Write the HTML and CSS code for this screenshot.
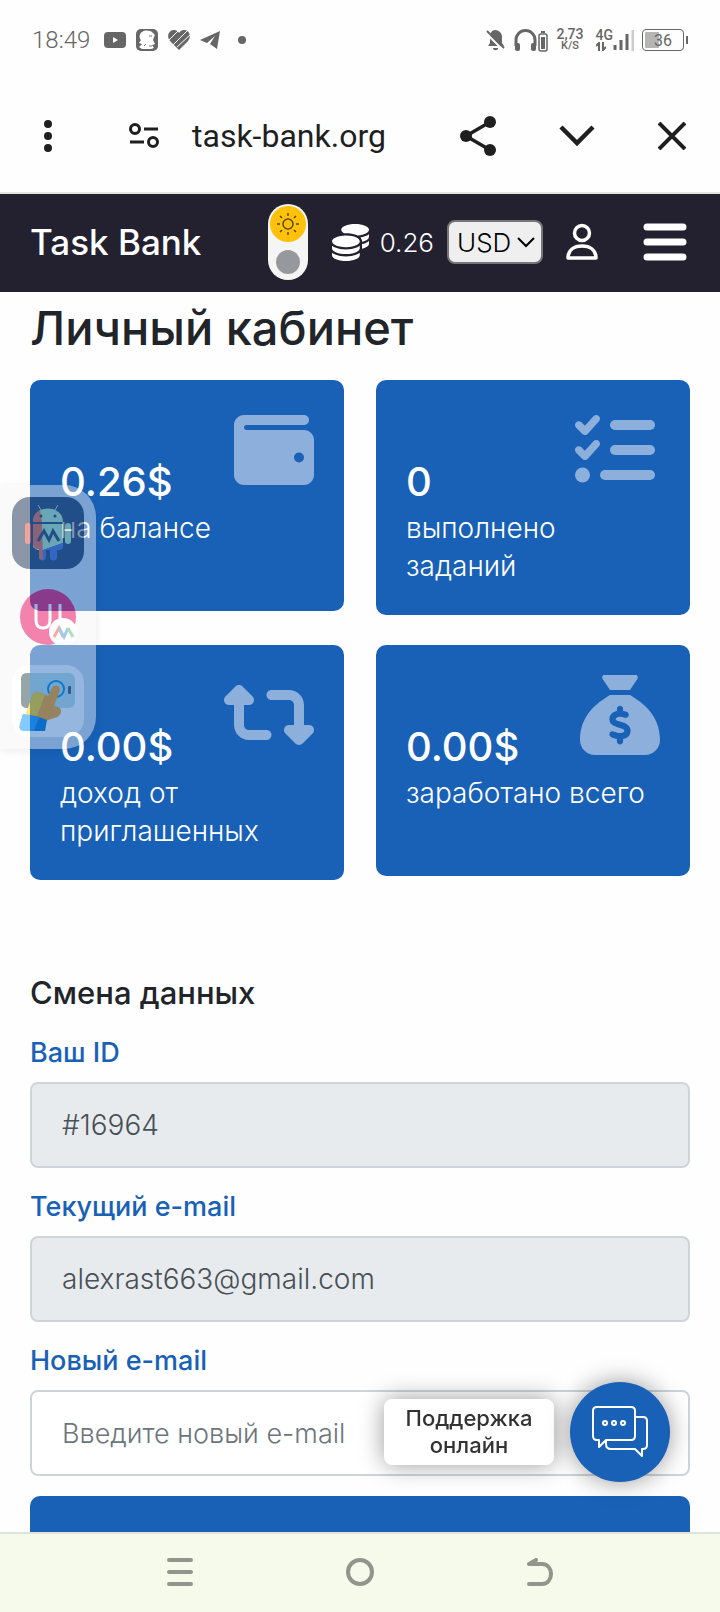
FILE: index.html
```html
<!DOCTYPE html>
<html lang="ru">
<head>
    <meta charset="UTF-8">
    <meta name="viewport" content="width=device-width, initial-scale=1.0">
    <title>Task Bank - Личный кабинет</title>
    <link rel="stylesheet" href="styles.css">
</head>
<body>

    <div class="status-bar">
        <div class="status-left">
            <span class="clock">18:49</span>
            <svg width="22" height="22" viewBox="0 0 22 22"><rect y="3" width="22" height="16" rx="4" fill="#666"/><path d="M9 8l5 3-5 3z" fill="#fff"/></svg>
            <svg width="22" height="22" viewBox="0 0 22 22"><rect width="22" height="22" rx="5" fill="#666"/><path d="M6 3c3-2 8-2 11 1 2 1 2 3 1 4l-1 3 2 4-3 1 2 3-3 1H6l-3-2 3-3-3-1 2-3C3 9 3 5 6 3z" fill="#fff"/><path d="M13 7h3M8 17l2-2M13 17h3" stroke="#777" fill="none"/></svg>
            <svg width="22" height="20" viewBox="0 0 22 20"><path d="M11 20L2 11C-2 6 1 0 6 0c2 0 4 1 5 3 1-2 3-3 5-3 5 0 8 6 4 11z" fill="#666"/><path d="M1 10L10 1M5 15L19 1M9 17L22 5" stroke="#fff" stroke-width="1"/></svg>
            <svg width="20" height="18" viewBox="0 0 20 18"><path d="M0 9L20 0l-3 18-7-5 5-8-8 7z" fill="#666"/></svg>
            <span class="dot"></span>
        </div>
        <div class="status-right">
            <svg width="20" height="22" viewBox="0 0 20 22"><path d="M9 1c4 0 7 3 7 7v6l2 3H2l2-3V8c0-4 2-7 5-7zM7 19h5c0 3-5 3-5 0z" fill="#666"/><path d="M0 4l18 18" stroke="#fff" stroke-width="2"/><path d="M1 2l17 17" stroke="#666" stroke-width="2"/></svg>
            <svg width="34" height="24" viewBox="0 0 34 24"><path d="M2 18v-6a9.500 9.500 0 0 1 19 0v6" fill="none" stroke="#666" stroke-width="3"/><rect x="1" y="15" width="5" height="8" rx="2" fill="#666"/><rect x="17" y="15" width="5" height="8" rx="2" fill="#666"/><rect x="25" y="6" width="8" height="17" rx="2" fill="none" stroke="#666" stroke-width="1.500"/><path d="M27 4h4" stroke="#666" stroke-width="2"/><rect x="27" y="9" width="4" height="12" fill="#666"/></svg>
            <span class="speed"><b>2,73</b><small>K/S</small></span>
            <span class="network">
                <span class="network-type"><b>4G</b>
                    <svg width="10" height="9" viewBox="0 0 10 9"><path d="M3 9V1L0 4M7 0v8l3-3" fill="none" stroke="#666" stroke-width="2"/></svg>
                </span>
                <svg width="21" height="22" viewBox="0 0 21 22"><path d="M2 21v-5M8 21V11M14 21V5" stroke="#666" stroke-width="3"/><path d="M20 22V1" stroke="#ccc" stroke-width="3"/></svg>
            </span>
            <span class="battery">36</span>
        </div>
    </div>

    <div class="browser-bar">
        <button class="icon-btn" aria-label="Меню браузера">
            <svg width="8" height="32" viewBox="0 0 8 32" fill="#1f1f1f"><circle cx="4" cy="4" r="4"/><circle cx="4" cy="16" r="4"/><circle cx="4" cy="28" r="4"/></svg>
        </button>
        <svg class="site-icon" width="30" height="26" viewBox="0 0 30 26" fill="none" stroke="#1f1f1f" stroke-width="3"><circle cx="6" cy="6" r="4.500"/><path d="M15 6h14M1 19h14"/><circle cx="24" cy="19" r="4.500"/></svg>
        <span class="url">task-bank.org</span>
        <div class="browser-actions">
            <button class="icon-btn" aria-label="Поделиться">
                <svg width="36" height="40" viewBox="0 0 36 40" fill="#1f1f1f"><path d="M30 6L6 20l24 14" fill="none" stroke="#1f1f1f" stroke-width="3.500"/><circle cx="30" cy="6" r="6"/><circle cx="6" cy="20" r="6"/><circle cx="30" cy="34" r="6"/></svg>
            </button>
            <button class="icon-btn" aria-label="Свернуть">
                <svg width="36" height="22" viewBox="0 0 36 22" fill="none" stroke="#1f1f1f" stroke-width="4.500"><path d="M2 2l16 16L34 2"/></svg>
            </button>
            <button class="icon-btn" aria-label="Закрыть">
                <svg width="28" height="28" viewBox="0 0 28 28" stroke="#1f1f1f" stroke-width="4"><path d="M1 1l26 26M27 1L1 27"/></svg>
            </button>
        </div>
    </div>

    <header class="site-header">
        <a class="logo" href="#">Task Bank</a>
        <label class="theme-switch">
            <input type="checkbox" aria-label="Тёмная тема">
            <span class="sun">
                <svg width="24" height="24" viewBox="0 0 24 24" fill="none" stroke="#5c4710" stroke-width="1.500"><circle cx="12" cy="12" r="5"/><path d="M12 1v3M12 20v3M1 12h3M20 12h3M4 4l2 2M18 18l2 2M20 4l-2 2M6 18l-2 2"/></svg>
            </span>
            <span class="knob"></span>
        </label>
        <div class="header-balance">
            <svg width="37" height="37" viewBox="0 0 512 512" fill="#fff"><path d="M512 80c0 18-14.300 34.600-38.400 48-29.100 16.100-72.500 27.500-122.300 30.900-3.700-1.800-7.400-3.500-11.300-5C300.600 137.400 248.200 128 192 128c-8.300 0-16.400 .2-24.500 .6l-1.100-.6C142.300 114.600 128 98 128 80c0-44.200 86-80 192-80s192 35.800 192 80zM160.700 161.100c10.200-.7 20.700-1.100 31.300-1.100 62.200 0 117.400 12.300 152.500 31.400C369.300 204.900 384 221.700 384 240c0 4-.7 7.900-2.100 11.700-4.600 13.200-17 25.300-35 35.500-33.900 19-90.800 32.800-154.900 32.800-60.600 0-114.500-11.700-149.800-30.100-2-1-3.900-2.100-5.700-3.200C13.900 274.300 0 257.700 0 240c0-34.800 53.400-64.500 128-75.400 10.500-1.500 21.400-2.700 32.700-3.500zM416 240c0-21.900-10.600-39.900-24.100-53.400 28.300-4.400 54.200-11.400 76.200-20.500 16.300-6.800 31.500-15.200 43.900-25.500V176c0 19.300-16.500 37.100-43.800 50.900-14.600 7.400-32.400 13.700-52.400 18.500 .1-1.800 .2-3.500 .2-5.400zM384 336c0 18-14.300 34.600-38.400 48-33.800 18.700-89.600 32-153.600 32-64 0-121-14-154.900-33C13.900 370.300 0 353.700 0 336v-35.400c12.500 10.300 27.600 18.700 43.900 25.500C83.400 342.600 135.800 352 192 352s108.600-9.400 148.100-25.900c7.800-3.200 15.300-6.900 22.400-10.900 7.600-4.300 14.700-9.200 21.500-14.600V336zM416 336v-58.100c19-4.200 36.500-9.500 52.100-16 16.300-6.800 31.500-15.200 43.900-25.500V272c0 10.500-5 21-14.900 30.900-16.300 16.300-45 29.700-81.300 38.400 .1-1.700 .2-3.500 .2-5.300zM192 448c56.200 0 108.600-9.400 148.100-25.900 16.300-6.800 31.500-15.200 43.900-25.500V432c0 44.200-86 80-192 80S0 476.200 0 432v-35.400c12.500 10.300 27.600 18.700 43.900 25.500C83.400 438.600 135.800 448 192 448z"/></svg>
            <span>0.26</span>
        </div>
        <div class="currency">
            <select aria-label="Валюта">
                <option>USD</option>
                <option>RUB</option>
            </select>
            <svg width="18" height="11" viewBox="0 0 18 11" fill="none" stroke="#000" stroke-width="2"><path d="M1 1l8 8 8-8"/></svg>
        </div>
        <a class="profile" href="#" aria-label="Профиль">
            <svg width="32" height="38" viewBox="0 0 32 38" fill="none" stroke="#fff" stroke-width="3.500"><circle cx="16" cy="10" r="7.500"/><path d="M2 35c0-8 6-12 14-12s14 4 14 12z" stroke-linejoin="round"/></svg>
        </a>
        <button class="icon-btn" aria-label="Меню">
            <svg width="44" height="38" viewBox="0 0 44 38" stroke="#fff" stroke-width="7" stroke-linecap="round"><path d="M4 4h36M4 19h36M4 34h36"/></svg>
        </button>
    </header>

    <main class="content">
        <h1>Личный кабинет</h1>

        <div class="cards">
            <div class="card">
                <svg class="card-icon" width="80" height="80" viewBox="0 0 512 512"><path d="M64 32C28.700 32 0 60.700 0 96V416c0 35.300 28.700 64 64 64H448c35.300 0 64-28.700 64-64V192c0-35.300-28.700-64-64-64H80c-8.800 0-16-7.200-16-16s7.200-16 16-16H448c17.700 0 32-14.300 32-32s-14.300-32-32-32H64zM416 272a32 32 0 1 1 0 64 32 32 0 1 1 0-64z"/></svg>
                <div class="card-value">0.26$</div>
                <div class="card-text">на балансе</div>
            </div>
            <div class="card">
                <svg class="card-icon" width="90" height="80" viewBox="-32 0 576 512"><path id="check" d="M152.100 38.200c9.900 8.900 10.700 24 1.800 33.900l-72 80c-4.400 4.900-10.600 7.800-17.200 7.900s-12.900-2.400-17.600-7L7 113C-2.300 103.600-2.300 88.400 7 79s24.600-9.400 33.900 0l22.100 22.100 55.100-61.200c8.900-9.900 24-10.700 33.900-1.800z"/><use href="#check" y="160"/><rect x="224" y="64" width="288" height="64" rx="32"/><rect x="224" y="224" width="288" height="64" rx="32"/><rect x="160" y="384" width="352" height="64" rx="32"/><circle cx="48" cy="416" r="48"/></svg>
                <div class="card-value">0</div>
                <div class="card-text">выполнено заданий</div>
            </div>
            <div class="card">
                <svg class="card-icon" width="90" height="80" viewBox="0 0 576 512"><path d="M272 416c17.700 0 32-14.300 32-32s-14.300-32-32-32H160c-17.700 0-32-14.300-32-32V192h32c12.900 0 24.600-7.800 29.600-19.800s2.200-25.700-6.900-34.900l-64-64c-12.500-12.500-32.800-12.500-45.300 0l-64 64c-9.200 9.200-11.900 22.900-6.900 34.900s16.600 19.800 29.600 19.800l32 0 0 128c0 53 43 96 96 96H272zM304 96c-17.700 0-32 14.300-32 32s14.300 32 32 32l112 0c17.700 0 32 14.300 32 32l0 128-32 0c-12.900 0-24.600 7.800-29.600 19.800s-2.200 25.700 6.900 34.900l64 64c12.500 12.500 32.800 12.500 45.300 0l64-64c9.200-9.200 11.900-22.900 6.900-34.900s-16.600-19.800-29.600-19.800l-32 0V192c0-53-43-96-96-96L304 96z"/></svg>
                <div class="card-value">0.00$</div>
                <div class="card-text">доход от приглашенных</div>
            </div>
            <div class="card">
                <svg class="card-icon" width="80" height="80" viewBox="0 0 512 512"><path d="M320 96H192L144.600 24.900C137.500 14.200 145.100 0 157.900 0H354.100c12.800 0 20.400 14.200 13.300 24.900L320 96zM192 128H320c3.800 2.500 8.100 5.300 13 8.400C389.700 172.700 512 250.900 512 416c0 53-43 96-96 96H96c-53 0-96-43-96-96C0 250.900 122.300 172.700 179 136.400c4.800-3.100 9.200-5.900 13-8.400zm84 88c0-11-9-20-20-20s-20 9-20 20v14c-7.600 1.700-15.200 4.400-22.200 8.500c-13.900 8.300-25.900 22.800-25.800 43.900c.1 20.300 12 33.100 24.700 40.700c11 6.600 24.700 10.800 35.600 14l1.700 .5c12.600 3.800 21.800 6.800 28 10.700c5.100 3.200 5.800 5.400 5.900 8.200c.1 5-1.800 8-5.900 10.500c-5 3.100-12.900 5-21.400 4.700c-11.100-.4-21.500-3.900-35.100-8.500c-2.300-.8-4.700-1.600-7.200-2.400c-10.500-3.500-21.800 2.200-25.300 12.600s2.200 21.800 12.600 25.300c1.900 .6 4 1.300 6.100 2.100c8.300 2.900 17.900 6.200 28.200 8.400V424c0 11 9 20 20 20s20-9 20-20V410.200c8-1.700 16-4.500 23.200-9c14.300-8.900 25.100-24.100 24.800-45c-.3-20.300-11.700-33.400-24.600-41.600c-11.500-7.200-25.900-11.600-37.100-15l-.7-.2c-12.800-3.900-21.900-6.700-28.300-10.500c-5.200-3.100-5.300-4.900-5.300-6.700c0-3.700 1.400-6.500 6.200-9.300c5.400-3.200 13.600-5.100 21.500-5c9.600 .1 20.200 2.200 31.200 5.200c10.700 2.800 21.600-3.500 24.500-14.200s-3.500-21.600-14.200-24.500c-6.500-1.700-13.700-3.400-21.100-4.700V216z"/></svg>
                <div class="card-value">0.00$</div>
                <div class="card-text">заработано всего</div>
            </div>
        </div>

        <h2>Смена данных</h2>
        <form class="profile-form">
            <div class="field">
                <label for="userId">Ваш ID</label>
                <input type="text" id="userId" value="#16964" readonly>
            </div>
            <div class="field">
                <label for="email">Текущий e-mail</label>
                <input type="text" id="email" value="alexrast663@gmail.com" readonly>
            </div>
            <div class="field">
                <label for="newEmail">Новый e-mail</label>
                <input type="email" id="newEmail" placeholder="Введите новый e-mail">
            </div>
            <button type="submit" class="save-btn" aria-label="Сохранить"></button>
        </form>
    </main>

    <nav class="system-nav">
        <button class="icon-btn" aria-label="Недавние">
            <svg width="26" height="28" viewBox="0 0 26 28" stroke="#92958c" stroke-width="4" stroke-linecap="round"><path d="M2 2h22M2 14h22M2 26h22"/></svg>
        </button>
        <button class="icon-btn" aria-label="Домой">
            <svg width="28" height="28" viewBox="0 0 28 28" fill="none" stroke="#92958c" stroke-width="4"><circle cx="14" cy="14" r="12"/></svg>
        </button>
        <button class="icon-btn" aria-label="Назад">
            <svg width="26" height="28" viewBox="0 0 26 28" fill="none" stroke="#92958c" stroke-width="4" stroke-linecap="round" stroke-linejoin="round"><path d="M9 2L2 6h13c12 0 12 20 0 20H2"/></svg>
        </button>
    </nav>

    <!-- app shortcuts -->
    <div class="side-panel">
        <svg width="72" height="72" viewBox="0 0 72 72">
            <rect width="72" height="72" rx="18" fill="#2a3f60"/>
            <path d="M21 25c0-18 30-18 30 0z" fill="#aee2b5"/>
            <path d="M21 25c0-6 3-10 7-12l2 12z" fill="#ed6644"/>
            <path d="M29 13l-3-5M43 13l3-5" stroke="#aee2b5"/>
            <circle cx="29" cy="19" r="1.500" fill="#2a3f60"/><circle cx="43" cy="19" r="1.500" fill="#2a3f60"/>
            <path d="M27 51h7v9a3 3 0 0 1-7 0zM38 51h7v9a3 3 0 0 1-7 0z" fill="#4a6fcc"/>
            <path d="M21 27h30v19l-20 7h-6l-4-3z" fill="#aee2b5"/>
            <path d="M31 53l20-7v3q0 4-4 4z" fill="#4a6fcc"/>
            <path d="M21 27h9l1 35q-4 2-4-3v-7q-6 0-6-5z" fill="#ed6644"/>
            <rect x="13" y="26" width="6" height="21" rx="3" fill="#e45a41"/>
            <rect x="53" y="26" width="6" height="21" rx="3" fill="#aee2b5"/>
            <path d="M26 44l6-10 5 9 4-9 6 10" fill="none" stroke="#2a3f60" stroke-width="3"/>
        </svg>
        <svg width="72" height="56" viewBox="0 0 72 56">
            <circle cx="36" cy="28" r="28" fill="#e91a66"/>
            <path d="M24 15v16q0 8 7 8t7-8V15M48 15v16" fill="none" stroke="#fff" stroke-width="3"/>
            <circle cx="51" cy="43" r="14" fill="#fff"/>
            <path d="M42 48l5-9 4 9" fill="none" stroke="#ed6644" stroke-width="3"/>
            <path d="M47 39l5 9 4-9" fill="none" stroke="#5a9be0" stroke-width="3"/>
            <path d="M56 39l5 9" stroke="#66c28a" stroke-width="3"/>
        </svg>
        <svg width="72" height="72" viewBox="0 0 72 72">
            <rect width="72" height="72" rx="18" fill="#fff"/>
            <rect x="9" y="8" width="54" height="35" rx="6" fill="#bee1e6"/>
            <path d="M18 8h-3q-6 0-6 6v23q0 6 6 6h3z" fill="#3d5959"/>
            <circle cx="44" cy="24" r="8" fill="none" stroke="#008fdc" stroke-width="2"/>
            <rect x="56" y="21" width="3" height="8" rx="1" fill="#456"/>
            <path d="M14 49l7-20q2-3 6-2l9 4 4-8c3-5 8-2 8 2l-6 16q8 1 7 6-1 5-7 6l-6 2-4 3z" fill="#ff9f14"/>
            <path d="M14 49l7-20q2-3 6-2l6 3-8 21z" fill="#ffd316"/>
            <path d="M11 49l16 3 8 3-2 11H12q-6-1-4-7z" fill="#0078d8"/>
            <path d="M11 49l16 3-5 14H12q-6-1-4-7z" fill="#1c9dff"/>
        </svg>
    </div>

    <!-- online support -->
    <div class="support">
        <span class="support-text">Поддержка онлайн</span>
        <button class="support-btn" aria-label="Открыть чат">
            <svg width="56" height="52" viewBox="0 0 56 52" fill="none" stroke="#fff" stroke-width="2" stroke-linejoin="round"><path d="M5 1h34q4 0 4 4v25q0 4-4 4H14l-7 7v-7H5q-4 0-4-4V5q0-4 4-4z"/><path d="M44 11h7q4 0 4 4v24q0 4-4 4h-1v7l-7-7H19q-5 0-5-5v-3"/><circle cx="13" cy="17" r="2"/><circle cx="22" cy="17" r="2"/><circle cx="31" cy="17" r="2"/></svg>
        </button>
    </div>

</body>
</html>
```
FILE: styles.css
```css
* { box-sizing: border-box; }
body {
    font-family: Inter, "Open Sans", sans-serif;
    display: flex;
    flex-direction: column;
    height: 100vh;
    margin: 0;
    overflow: hidden;
    background-color: #fefefe;
    color: #212529;
}
svg { display: block; flex-shrink: 0; }
button, input, select { font-family: inherit; }
.icon-btn {
    display: flex;
    padding: 0;
    border: none;
    background: none;
    cursor: pointer;
}

/* status bar */
.status-bar {
    display: flex;
    flex-shrink: 0;
    justify-content: space-between;
    align-items: center;
    height: 80px;
    padding: 0 36px 0 32px;
    font-family: Roboto, sans-serif;
    color: #666;
}
.status-left, .status-right {
    display: flex;
    align-items: center;
    gap: 10px;
}
.clock { margin-right: 4px; font-size: 24px; font-weight: 300; }
.dot {
    width: 8px;
    height: 8px;
    margin-left: 8px;
    border-radius: 50%;
    background: #666;
}
.status-right { gap: 8px; }
.speed {
    display: flex;
    flex-direction: column;
    align-items: center;
    line-height: 12px;
}
.speed b { font-size: 14px; font-weight: 500; }
.speed small { font-size: 11px; font-weight: 500; }
.network { display: flex; align-items: center; margin-left: 4px; }
.network-type { display: flex; flex-direction: column; gap: 1px; }
.network-type b { font-size: 14px; font-weight: 500; line-height: 12px; }
.battery {
    position: relative;
    width: 42px;
    height: 22px;
    padding: 2px;
    border: 1px solid #666;
    border-radius: 4px;
    background: linear-gradient(to right, #b5b5b5 14px, transparent 14px) content-box;
    font-size: 16px;
    line-height: 17px;
    text-align: center;
}
.battery::after {
    content: "";
    position: absolute;
    top: 6px;
    right: -5px;
    width: 2px;
    height: 8px;
    background: #666;
}

/* browser bar */
.browser-bar {
    display: flex;
    flex-shrink: 0;
    align-items: center;
    height: 114px;
    padding: 0 34px 0 44px;
    border-bottom: 2px solid #e3e3e3;
}
.site-icon { margin-left: 77px; }
.url {
    margin-left: 33px;
    font-family: Roboto, sans-serif;
    font-size: 32px;
    color: #1f1f1f;
}
.browser-actions {
    display: flex;
    align-items: center;
    gap: 63px;
    margin-left: auto;
}

/* site header */
.site-header {
    display: flex;
    flex-shrink: 0;
    align-items: center;
    height: 98px;
    padding: 0 33px 2px 30px;
    background: #232130;
    color: #fff;
}
.logo {
    margin-right: auto;
    font-size: 35px;
    font-weight: 500;
    color: #fff;
    text-decoration: none;
}
.theme-switch {
    position: relative;
    display: flex;
    flex-direction: column;
    align-items: center;
    gap: 8px;
    width: 40px;
    height: 76px;
    padding-top: 2px;
    border-radius: 20px;
    background: #f5f5f5;
}
.theme-switch input {
    position: absolute;
    inset: 0;
    width: 100%;
    height: 100%;
    margin: 0;
    opacity: 0;
}
.sun {
    display: flex;
    align-items: center;
    justify-content: center;
    width: 36px;
    height: 36px;
    border-radius: 50%;
    background: #ffc10a;
}
.knob {
    width: 24px;
    height: 24px;
    border-radius: 50%;
    background: #97989d;
}
.header-balance {
    display: flex;
    align-items: center;
    gap: 11px;
    margin: 0 13px 0 24px;
    font-size: 26px;
    font-weight: 300;
}
.currency {
    position: relative;
    width: 96px;
}
.currency select {
    appearance: none;
    display: block;
    width: 100%;
    height: 44px;
    padding: 0 8px;
    border: 2px solid #767676;
    border-radius: 8px;
    background: #efefef;
    color: #000;
    font-size: 26px;
    font-weight: 300;
}
.currency svg {
    position: absolute;
    top: 17px;
    right: 8px;
    pointer-events: none;
}
.profile { margin: 0 45px 0 23px; }

/* page */
.content {
    flex: 1;
    min-height: 0;
    overflow: hidden;
    padding: 7px 30px 0;
}
h1 {
    margin: 0 0 23px;
    font-size: 47px;
    font-weight: 500;
    line-height: 58px;
}
h2 {
    margin: 94px 0 20px;
    font-size: 31px;
    font-weight: 500;
    line-height: 38px;
}
.cards {
    display: grid;
    grid-template-columns: 1fr 1fr;
    gap: 30px 32px;
    align-items: start;
}
.card {
    position: relative;
    min-height: 231px;
    padding: 78px 30px 30px;
    border-radius: 10px;
    background: #1861b7;
    color: #fff;
}
.card-icon {
    position: absolute;
    top: 30px;
    right: 30px;
    fill: #8cafdc;
}
.card-value {
    margin-bottom: 3px;
    font-size: 40px;
    font-weight: 500;
    line-height: 48px;
}
.card-text {
    font-size: 28px;
    font-weight: 300;
    line-height: 38px;
}

.field { margin-bottom: 18px; }
.field label {
    display: block;
    margin-bottom: 8px;
    font-size: 27px;
    font-weight: 500;
    line-height: 42px;
    color: #1861b7;
}
.field input {
    display: block;
    width: 100%;
    height: 86px;
    padding: 0 30px;
    border: 2px solid #ced4da;
    border-radius: 8px;
    background: #fff;
    color: #495057;
    font-size: 28px;
    font-weight: 300;
}
.field input[readonly] { background: #e8ebee; }
.field input::placeholder { color: #6c757d; font-size: 27px; opacity: 1; }
.save-btn {
    display: block;
    width: 100%;
    height: 86px;
    margin-top: 20px;
    border: none;
    border-radius: 10px;
    background: #1861b7;
    cursor: pointer;
}

/* bottom navigation */
.system-nav {
    display: flex;
    flex-shrink: 0;
    align-items: center;
    justify-content: center;
    gap: 153px;
    height: 80px;
    padding-bottom: 2px;
    border-top: 2px solid #e0e3d8;
    background: #f6faea;
}

.side-panel {
    position: fixed;
    top: 485px;
    left: 0;
    display: flex;
    flex-direction: column;
    gap: 20px;
    width: 96px;
    padding: 12px;
    border-radius: 0 32px 32px 0;
    background: rgba(246, 246, 246, 0.82);
    box-shadow: 0 2px 8px rgba(0, 0, 0, 0.15);
    opacity: 0.54;
}

.support {
    position: fixed;
    right: 50px;
    bottom: 130px;
    display: flex;
    align-items: center;
    gap: 16px;
}
.support-text {
    width: 170px;
    padding: 6px 20px;
    border-radius: 8px;
    background: #fff;
    box-shadow: 0 0 24px rgba(0, 0, 0, 0.4);
    color: #333;
    font-size: 22px;
    font-weight: 500;
    line-height: 27px;
    text-align: center;
}
.support-btn {
    display: flex;
    align-items: center;
    justify-content: center;
    width: 100px;
    height: 100px;
    padding: 0;
    border: none;
    border-radius: 50%;
    background: #1861b7;
    box-shadow: 0 0 24px rgba(0, 0, 0, 0.4);
    cursor: pointer;
}
```
